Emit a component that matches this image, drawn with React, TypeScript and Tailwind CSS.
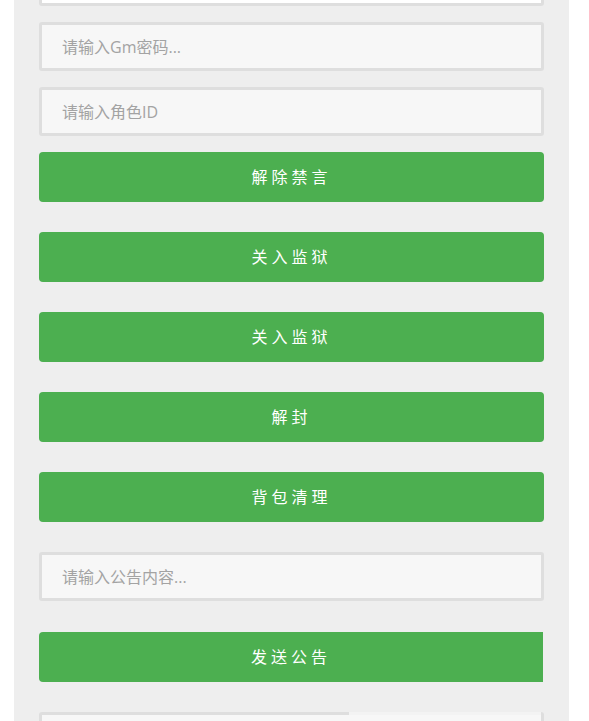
import React from 'react';

const font = { fontFamily: '"Open Sans", "Noto Sans CJK SC", sans-serif' };

function Field({ placeholder, white }: { placeholder?: string; white?: boolean }) {
    return (
        <input
            placeholder={placeholder}
            className={`h-[49px] w-full rounded-[3px] border-[3px] border-[#dedede] px-[20px] text-[16px] text-[#555] outline-none placeholder:text-[#a3a3a3] ${white ? 'bg-white' : 'bg-[#f7f7f7]'}`}
            style={font}
        />
    );
}

function Btn({ label, square }: { label: string; square?: boolean }) {
    return (
        <button
            className={`h-[50px] w-full bg-[#4caf50] text-[16px] tracking-[4px] text-white ${square ? 'rounded-l-[4px]' : 'rounded-[4px]'}`}
            style={font}
        >
            {label}
        </button>
    );
}

// half-loaded field at the bottom edge: top border only partly drawn
function LoadingField() {
    return (
        <div className="flex h-[49px] w-full flex-col rounded-[3px] border-x-[3px] border-b-[3px] border-[#dedede] bg-[#f7f7f7]">
            <div className="flex h-[3px] w-full">
                <div className="w-[307px] bg-[#dedede]" />
                <div className="flex-1 bg-[#f3f3f3]" />
            </div>
        </div>
    );
}

export default function App() {
    return (
        <div className="min-h-screen bg-white">
            <div className="ml-[14px] w-[555px] bg-[#eeeeee] px-[25px] pb-[40px]">
                <div className="-mt-[43px] flex flex-col">
                    <Field white />
                    <div className="mt-[16px]"><Field placeholder="请输入Gm密码..." /></div>
                    <div className="mt-[16px]"><Field placeholder="请输入角色ID" /></div>
                    <div className="mt-[16px]"><Btn label="解除禁言" /></div>
                    <div className="mt-[30px]"><Btn label="关入监狱" /></div>
                    <div className="mt-[30px]"><Btn label="关入监狱" /></div>
                    <div className="mt-[30px]"><Btn label="解封" /></div>
                    <div className="mt-[30px]"><Btn label="背包清理" /></div>
                    <div className="mt-[30px]"><Field placeholder="请输入公告内容..." /></div>
                    <div className="mt-[31px] pr-[1px]"><Btn label="发送公告" square /></div>
                    <div className="mt-[30px]"><LoadingField /></div>
                </div>
            </div>
        </div>
    );
}
